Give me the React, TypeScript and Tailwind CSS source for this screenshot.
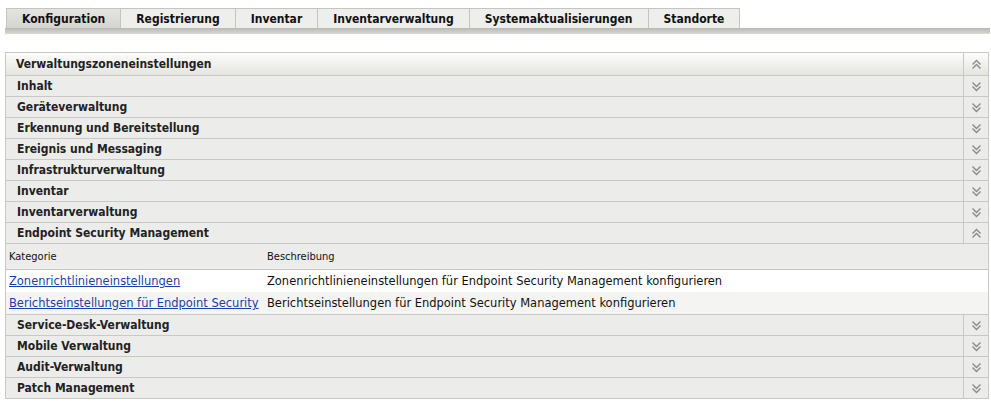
import React from 'react';

const tabs = ['Konfiguration', 'Registrierung', 'Inventar', 'Inventarverwaltung', 'Systemaktualisierungen', 'Standorte'];

const before = ['Inhalt', 'Geräteverwaltung', 'Erkennung und Bereitstellung', 'Ereignis und Messaging', 'Infrastrukturverwaltung', 'Inventar', 'Inventarverwaltung'];
const after = ['Service-Desk-Verwaltung', 'Mobile Verwaltung', 'Audit-Verwaltung', 'Patch Management'];

function Chevrons({ up }: { up?: boolean }) {
    return (
        <svg width="11" height="11" viewBox="0 0 11 11" className={up ? '' : 'rotate-180'}>
            <path d="M1.5 5.5 L5.5 1.5 L9.5 5.5 M1.5 9.5 L5.5 5.5 L9.5 9.5" fill="none" stroke="#8a8a8a" strokeWidth="1.4" />
        </svg>
    );
}

function SectionRow({ label, up, top }: { label: string; up?: boolean; top?: boolean }) {
    return (
        <div className={`flex border-b border-[#c8c8c4] ${top ? 'h-[23px] bg-gradient-to-b from-[#fdfdfc] to-[#e4e4e0]' : 'h-[21px] bg-[#ececea]'}`}>
            <div className={`flex-1 flex items-center font-bold text-[12px] text-[#222] ${top ? 'pl-[10px]' : 'pl-[11px]'}`}>{label}</div>
            <div className="w-[25px] border-l border-[#c8c8c4] flex items-center justify-center">
                <Chevrons up={up} />
            </div>
        </div>
    );
}

export default function App() {
    return (
        <div className="w-[991px] h-[406px] bg-white text-[#111]" style={{ fontFamily: '"DejaVu Sans Condensed", "DejaVu Sans", Tahoma, sans-serif' }}>
            {/* Tabs */}
            <div className="pt-[8px] pl-[6px]">
                <div className="flex">
                    {tabs.map((t, i) => (
                        <div
                            key={t}
                            className={`h-[20px] px-[15px] flex items-center font-bold text-[12px] border-t border-r border-[#c4c4c0] ${i === 0 ? 'border-l bg-gradient-to-b from-[#e4e4e0] to-[#d4d4d0]' : 'bg-[#eeeeec]'}`}
                        >
                            {t}
                        </div>
                    ))}
                </div>
            </div>
            <div className="ml-[5px] mr-[1px] h-[6px] bg-gradient-to-b from-[#b8b8b4] to-[#d8d8d4]" />

            {/* Panel */}
            <div className="mt-[18px] ml-[5px] mr-[2px] border border-[#c8c8c4] border-b-0">
                <SectionRow label="Verwaltungszoneneinstellungen" up top />
                {before.map(l => <SectionRow key={l} label={l} />)}
                <SectionRow label="Endpoint Security Management" up />
                <div>
                    <div className="flex h-[26px] pt-[2px] items-center bg-[#ececea] border-b border-[#c8c8c4] text-[11px]">
                        <div className="w-[260px] pl-[3px]">Kategorie</div>
                        <div className="pl-[1px]">Beschreibung</div>
                    </div>
                    <div className="flex h-[22px] items-center bg-white text-[12.75px]">
                        <a className="w-[260px] pl-[3px] text-[#1a3fae] underline">Zonenrichtlinieneinstellungen</a>
                        <div className="pl-[1px]">Zonenrichtlinieneinstellungen für Endpoint Security Management konfigurieren</div>
                    </div>
                    <div className="flex h-[23px] items-center bg-[#f4f4f3] border-b border-[#c8c8c4] text-[12.75px]">
                        <a className="w-[260px] pl-[3px] text-[#1a3fae] underline whitespace-nowrap">Berichtseinstellungen für Endpoint Security</a>
                        <div className="pl-[1px]">Berichtseinstellungen für Endpoint Security Management konfigurieren</div>
                    </div>
                </div>
                {after.map(l => <SectionRow key={l} label={l} />)}
            </div>
        </div>
    );
}
